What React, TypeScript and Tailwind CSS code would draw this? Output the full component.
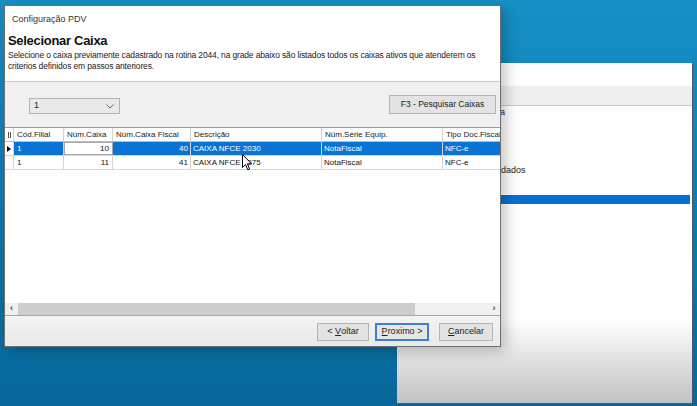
const font = { fontFamily: '"Liberation Sans", Arial, sans-serif' };

const columns = [
    { label: "Cód.Filial", width: "w-[50px]" },
    { label: "Núm.Caixa", width: "w-[49px]" },
    { label: "Núm.Caixa Fiscal", width: "w-[78px]" },
    { label: "Descrição", width: "w-[131px]" },
    { label: "Núm.Série Equip.", width: "w-[121px]" },
    { label: "Tipo Doc.Fiscal", width: "w-[80px]" },
];

const rows = [
    { filial: "1", caixa: "10", fiscal: "40", desc: "CAIXA NFCE 2030", serie: "NotaFiscal", tipo: "NFC-e" },
    { filial: "1", caixa: "11", fiscal: "41", desc: "CAIXA NFCE 2075", serie: "NotaFiscal", tipo: "NFC-e" },
];

function BackWindow() {
    return (
        <div className="absolute left-[397px] top-[63px] flex h-[341px] w-[296px] flex-col border-r border-b border-[#4d5860] bg-white">
            <div className="h-[23px] bg-white" />
            <div className="h-[20px] border-b border-[#c9c9c9] bg-[#efefef]" />
            <div className="flex flex-1 flex-col bg-gradient-to-b from-white from-[72%] to-[#c2c2c2] text-[9px] text-[#222]">
                <div className="mt-[1px] pl-[103px] leading-[11px]">a</div>
                <div className="mt-[47px] pl-[104px] leading-[11px]">dados</div>
                <div className="mt-[19px] ml-[103px] mr-[2px] h-[9px] bg-[#0a6fd1]" />
            </div>
        </div>
    );
}

function Grid() {
    return (
        <div className="flex h-[188px] flex-col overflow-hidden border-t border-[#9a9a9a] bg-white">
            <div className="flex h-[14px] border-b border-[#bdbdbd] text-[8px] leading-[13px] text-[#222]">
                <div className="flex w-[9px] shrink-0 items-center justify-center border-r border-[#d5d5d5]">
                    <div className="flex gap-[1px]">
                        <span className="h-[6px] w-[1px] bg-[#555]" />
                        <span className="h-[6px] w-[1px] bg-[#555]" />
                    </div>
                </div>
                {columns.map((c) => (
                    <div key={c.label} className={`${c.width} shrink-0 overflow-hidden whitespace-nowrap border-r border-[#d5d5d5] pl-[3px]`}>
                        {c.label}
                    </div>
                ))}
            </div>
            {rows.map((r, i) => {
                const sel = i === 0;
                const cell = sel ? "bg-[#0a73d6] text-white" : "bg-white text-[#111]";
                return (
                    <div key={r.caixa} className="flex h-[14px] border-b border-[#d5d5d5] text-[8px] leading-[13px]">
                        <div className="flex w-[9px] shrink-0 items-center justify-center border-r border-[#d5d5d5]">
                            {sel && <span className="h-0 w-0 border-y-[3px] border-l-[4px] border-y-transparent border-l-black" />}
                        </div>
                        <div className={`w-[50px] shrink-0 border-r border-[#d5d5d5] pl-[3px] ${cell}`}>{r.filial}</div>
                        <div className={`w-[49px] shrink-0 border-r border-[#d5d5d5] pr-[3px] text-right text-[#111] ${sel ? "bg-white outline outline-1 -outline-offset-1 outline-[#a8a8a8]" : ""}`}>{r.caixa}</div>
                        <div className={`w-[78px] shrink-0 border-r border-[#d5d5d5] pr-[2px] text-right ${cell}`}>{r.fiscal}</div>
                        <div className={`w-[131px] shrink-0 border-r border-[#d5d5d5] pl-[2px] ${cell}`}>{r.desc}</div>
                        <div className={`w-[121px] shrink-0 border-r border-[#d5d5d5] pl-[2px] ${cell}`}>{r.serie}</div>
                        <div className={`flex-1 pl-[2px] ${cell}`}>{r.tipo}</div>
                    </div>
                );
            })}
            <div className="flex-1" />
            <div className="flex h-[12px] items-center bg-[#f0f0f0] text-[9px] text-[#444]">
                <div className="flex w-[13px] justify-center font-bold">‹</div>
                <div className="h-full w-[397px] bg-[#cdcdcd]" />
                <div className="flex-1" />
                <div className="flex w-[12px] justify-center font-bold">›</div>
            </div>
        </div>
    );
}

function Dialog() {
    return (
        <div className="absolute left-[4px] top-[5px] flex h-[342px] w-[497px] flex-col border border-[#6f6f6f] bg-[#f0f0f0] shadow-[4px_4px_14px_rgba(0,0,0,0.25)]">
            <div className="flex h-[76px] flex-col border-b border-[#c6c6c6] bg-white px-[3px]">
                <div className="mt-[7px] pl-[4px] text-[9px] leading-[12px] text-[#333]">Configuração PDV</div>
                <div className="mt-[9px] text-[13px] font-bold leading-[14px] tracking-[-0.3px] text-[#111]">Selecionar Caixa</div>
                <div className="mt-[2px] w-[480px] text-[8.5px] leading-[11px] tracking-[-0.15px] text-[#222]">
                    Selecione o caixa previamente cadastrado na rotina 2044, na grade abaixo são listados todos os caixas ativos que atenderem os criterios definidos em passos anteriores.
                </div>
            </div>
            <div className="flex h-[45px] items-start justify-between pl-[24px] pr-[4px]">
                <div className="mt-[16px] flex h-[16px] w-[91px] items-center justify-between border border-[#b4b4b4] bg-[#e9e9e9] pl-[4px] pr-[5px] text-[9px] text-[#222]">
                    <span>1</span>
                    <svg width="8" height="5" viewBox="0 0 8 5" fill="none" stroke="#666" strokeWidth="1">
                        <path d="M0.5 0.5 L4 4 L7.5 0.5" />
                    </svg>
                </div>
                <div className="mt-[13px] flex h-[19px] w-[107px] items-center justify-center border border-[#b4b4b4] bg-[#e3e3e3] text-[8.5px] text-[#222]">
                    F3 - Pesquisar Caixas
                </div>
            </div>
            <Grid />
            <div className="flex flex-1 items-start justify-end gap-[6px] border-t border-[#a8a8a8] bg-gradient-to-b from-[#f3f3f3] to-[#e9e9e9] pr-[7px] pt-[7px] text-[9px] text-[#222]">
                <div className="flex h-[18px] w-[52px] items-center justify-center border border-[#b4b4b4] bg-[#e3e3e3]">
                    &lt;&nbsp;<span className="underline">V</span>oltar
                </div>
                <div className="mr-[4px] flex h-[18px] w-[54px] items-center justify-center border-2 border-[#3b80d2] bg-[#e6e6e6]">
                    <span className="underline">P</span>roximo &gt;
                </div>
                <div className="flex h-[18px] w-[54px] items-center justify-center border border-[#b4b4b4] bg-[#e3e3e3]">
                    <span className="underline">C</span>ancelar
                </div>
            </div>
        </div>
    );
}

export default function App() {
    return (
        <div style={font} className="relative h-[406px] w-[697px] overflow-hidden bg-gradient-to-b from-[#1790c6] via-[#0c7cb2] to-[#08679a]">
            <BackWindow />
            <Dialog />
            <svg className="absolute left-[242px] top-[154px]" width="11" height="17" viewBox="0 0 11 17">
                <path d="M0.5 0.5 L0.5 13.5 L3.5 10.5 L5.8 15.8 L7.6 15 L5.4 9.8 L9.5 9.8 Z" fill="white" stroke="black" strokeWidth="1" strokeLinejoin="round" />
            </svg>
        </div>
    );
}
